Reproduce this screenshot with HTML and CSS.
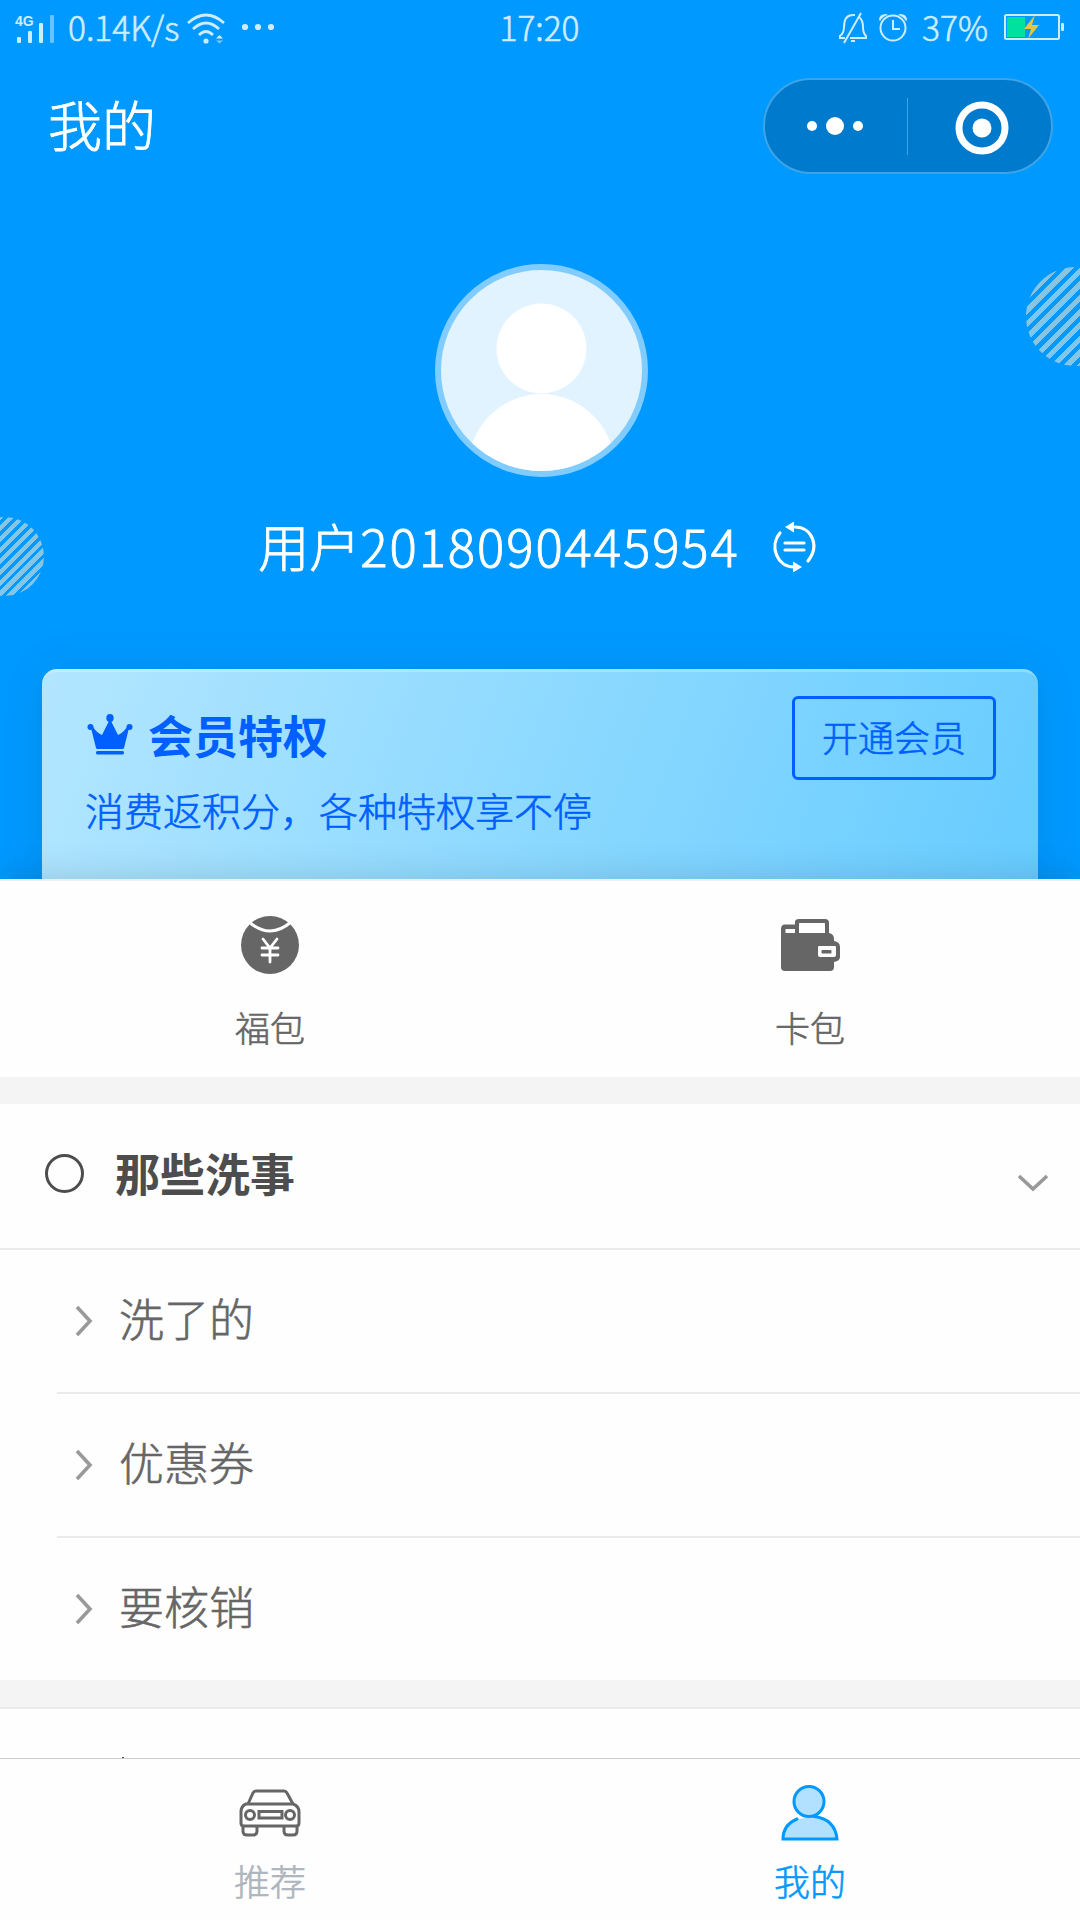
FILE: index.html
```
<!DOCTYPE html>
<html lang="zh-CN">

<head>
    <meta charset="utf-8" />
    <title>我的</title>
    <link rel="stylesheet" href="styles.css">
</head>

<body>
    <div class="page">
        <div class="top">
            <!-- 状态栏 -->
            <div class="status">
                <div class="status-left">
                    <svg class="signal" width="42" height="32" viewBox="0 0 42 32">
                        <text x="0" y="14">4G</text>
                        <rect x="2" y="25" width="4" height="6" rx="1" />
                        <rect x="13" y="19" width="4" height="12" rx="1" />
                        <rect x="24" y="11" width="4" height="20" rx="1" />
                        <rect x="35" y="3" width="4" height="28" rx="1" opacity=".5" />
                    </svg>
                    <span class="speed">0.14K/s</span>
                    <svg class="wifi" width="38" height="32" viewBox="0 0 38 32">
                        <g fill="none" stroke="#cdecff" stroke-width="2.8">
                            <path d="M1 11Q19-5 37 11" />
                            <path d="M6 17Q19 5 32 17" />
                            <path d="M12 23Q19 16 26 23" />
                        </g>
                        <circle cx="19" cy="29" r="2.6" />
                        <path d="M29 26.500l3.500-3.500 3.500 3.500z" />
                        <path d="M29 28.500l3.500 3 3.500-3z" opacity=".6" />
                    </svg>
                    <svg class="more" width="34" height="8" viewBox="0 0 34 8">
                        <circle cx="4" cy="4" r="3.100" />
                        <circle cx="17" cy="4" r="3.100" />
                        <circle cx="30" cy="4" r="3.100" />
                    </svg>
                </div>
                <span class="time">17:20</span>
                <div class="status-right">
                    <svg class="bell" width="30" height="32" viewBox="0 0 30 32" fill="none" stroke="#cdecff" stroke-width="2">
                        <path d="M7 26H2v-2q4-3 4-9Q6 3 15 3h2M21 5q4 3 4 10 0 6 3 9v2H12M23 1L6 31M13 29h4" />
                    </svg>
                    <svg class="clock" width="28" height="30" viewBox="0 0 28 30">
                        <circle cx="14" cy="16" r="12.500" fill="none" stroke="#cdecff" stroke-width="2" />
                        <path d="M14 8v9h7" fill="none" stroke="#cdecff" stroke-width="2" />
                        <path d="M0 8q0-6 7-6l2 1q-5 1-8 6zM28 8q0-6-7-6l-2 1q5 1 8 6z" />
                    </svg>
                    <span class="percent">37%</span>
                    <svg class="battery" width="60" height="28" viewBox="0 0 60 28">
                        <rect x="1" y="2" width="54" height="24" rx="1.500" fill="none" stroke="#cdecff" stroke-width="2" />
                        <rect x="3" y="4" width="18" height="20" fill="#00e0a0" />
                        <rect x="57" y="10" width="3" height="8" rx="1" />
                        <path d="M31 2L20 16h7l-3 10 11-14h-7z" fill="#e5c73c" />
                    </svg>
                </div>
            </div>

            <!-- 标题栏 -->
            <div class="nav">
                <h1>我的</h1>
                <div class="capsule">
                    <svg class="capsule-more" width="56" height="18" viewBox="0 0 56 18" fill="#fff">
                        <circle cx="5" cy="9" r="5" />
                        <circle cx="28" cy="9" r="9" />
                        <circle cx="51" cy="9" r="5" />
                    </svg>
                    <i class="divider"></i>
                    <svg class="capsule-close" width="54" height="54" viewBox="0 0 54 54">
                        <circle cx="27" cy="27" r="23" fill="none" stroke="#fff" stroke-width="7" />
                        <circle cx="27" cy="27" r="9.500" fill="#fff" />
                    </svg>
                </div>
            </div>

            <!-- 用户信息 -->
            <div class="user">
                <div class="avatar">
                    <svg width="201" height="201" viewBox="0 0 201 201" fill="#fff">
                        <circle cx="100.500" cy="78.500" r="45" />
                        <ellipse cx="100.500" cy="200" rx="74" ry="76" />
                    </svg>
                </div>
                <div class="name">
                    <span>用户<b>2018090445954</b></span>
                    <svg width="46" height="50" viewBox="0 0 46 50" fill="none" stroke="#fff" stroke-width="3.2" stroke-linecap="round">
                        <path d="M8 11C-3 24 5 45 22 45" />
                        <path d="M23 5C40 5 48 24 36 39" />
                        <path d="M13 21h19M13 28h19" />
                        <path d="M13 5l9-5.500v11zM30 45l-9-5.500v11z" fill="#fff" stroke="none" />
                    </svg>
                </div>
            </div>
            <i class="deco deco-right"></i>
            <i class="deco deco-left"></i>

            <!-- 会员 -->
            <div class="vip">
                <div class="vip-text">
                    <h2>
                        <svg width="46" height="42" viewBox="0 0 46 42" fill="#0060ff">
                            <path d="M23 5l8 16q5-2 9-8l2 1-5 20q0 1-2 1H11q-2 0-2-1L4 14l2-1q4 6 9 8z" />
                            <ellipse cx="23" cy="4" rx="3.700" ry="4" />
                            <circle cx="3.500" cy="13" r="3" />
                            <circle cx="42.500" cy="13" r="3" />
                            <rect x="9" y="37" width="28" height="3.500" rx="1.500" />
                        </svg>
                        <span>会员特权</span>
                    </h2>
                    <p>消费返积分，各种特权享不停</p>
                </div>
                <a class="vip-btn" href="javascript:;">开通会员</a>
            </div>
        </div>

        <div class="bags">
            <a href="javascript:;">
                <svg width="60" height="60" viewBox="0 0 60 60">
                    <circle cx="30" cy="30" r="29" fill="#666" />
                    <path d="M9 7Q30 25 51 7" fill="none" stroke="#fff" stroke-width="3" />
                    <path d="M23 24l7 9 7-9M22 33h16M22 40h16M30 33v14" fill="none" stroke="#fff" stroke-width="2.800" stroke-linecap="round" />
                </svg>
                <span>福包</span>
            </a>
            <a href="javascript:;">
                <svg width="60" height="60" viewBox="0 0 60 60" fill="#666">
                    <path fill-rule="evenodd" d="M5 9.500h10V7q0-3 4-3h26q4 0 4 4v10q5 1 5 6v2q6 1 6 6v10q0 4-6 5v5q0 4-4 4H5q-4 0-4-4V14q0-4.500 4-4.500zM19 8v10h26V8zM5.500 14v4H15v-4zM39 31q-1 0-1 1v8q0 2 2 2h14q2 0 2-2v-8q0-1-1-1z" />
                    <rect x="41.500" y="35" width="10" height="3.500" rx="1" />
                </svg>
                <span>卡包</span>
            </a>
        </div>

        <div class="group">
            <div class="group-head">
                <i class="ring"></i>
                <h3>那些洗事</h3>
                <svg width="32" height="18" viewBox="0 0 32 18"><path d="M2 2l14 13L30 2" /></svg>
            </div>
            <ul>
                <li>
                    <svg width="18" height="32" viewBox="0 0 18 32"><path d="M2 2l13 14L2 30" /></svg>
                    <span>洗了的</span>
                </li>
                <li>
                    <svg width="18" height="32" viewBox="0 0 18 32"><path d="M2 2l13 14L2 30" /></svg>
                    <span>优惠券</span>
                </li>
                <li>
                    <svg width="18" height="32" viewBox="0 0 18 32"><path d="M2 2l13 14L2 30" /></svg>
                    <span>要核销</span>
                </li>
            </ul>
        </div>

        <!-- 下一组，只露出顶部 -->
        <div class="next"><i></i></div>

        <div class="tabbar">
            <a href="javascript:;">
                <svg width="62" height="60" viewBox="0 0 62 60" fill="none" stroke="#666" stroke-width="3">
                    <path d="M9 21l5-11q1-2 3-2h28q2 0 3 2l6 11" />
                    <path d="M7 21h47q6 2 6 8v11q0 3-3 3H5q-3 0-3-3V29q0-6 5-8z" />
                    <circle cx="11" cy="32" r="4.500" />
                    <circle cx="51" cy="32" r="4.500" />
                    <rect x="20" y="28.500" width="23" height="6.500" />
                    <path d="M4 43v5q0 4 4 4h6q4 0 4-4v-5M45 43v5q0 4 4 4h5q4 0 4-4v-5" />
                </svg>
                <span>推荐</span>
            </a>
            <a class="active" href="javascript:;">
                <svg width="60" height="60" viewBox="0 0 60 60" stroke="#09f" stroke-width="3">
                    <path d="M17 36Q3 42 3 56H57Q56 35 34 34z" fill="#b2e0ff" stroke="none" />
                    <path d="M17 36Q3 42 3 56H57Q55 36 34 33.500" fill="none" stroke-linecap="round" />
                    <circle cx="29" cy="18.500" r="15" fill="#b2e0ff" />
                </svg>
                <span>我的</span>
            </a>
        </div>
    </div>
</body>

</html>
```
FILE: styles.css
```
* {
    margin: 0;
    padding: 0;
    box-sizing: border-box;
}

body {
    font-family: "Noto Sans CJK SC", sans-serif;
    font-weight: 300;
    color: #666;
    background: #fff;
    -webkit-text-stroke: .6px;
}

a {
    color: inherit;
    text-decoration: none;
}

svg {
    display: block;
    flex: none;
}

.page {
    width: 1080px;
    height: 1920px;
    display: flex;
    flex-direction: column;
    overflow: hidden;
}

/* 顶部蓝色区域 */
.top {
    position: relative;
    height: 879px;
    background: #09f;
    overflow: hidden;
}

.status {
    height: 56px;
    display: grid;
    grid-template-columns: 1fr auto 1fr;
    align-items: center;
    padding: 0 16px 0 15px;
    font-size: 33.5px;
    line-height: 54px;
    color: #cdecff;
    fill: #cdecff;
}

.status span {
    padding-bottom: 2px;
}

.status-left,
.status-right {
    display: flex;
    align-items: center;
}

.status-right {
    justify-content: flex-end;
}

.signal {
    margin-right: 11px;
}

.signal text {
    font: bold 14px "Liberation Sans", sans-serif;
    -webkit-text-stroke: 0;
}

.wifi {
    margin: -1px 16px 0 8px;
}

.more {
    margin-top: -2px;
}

.bell {
    margin-top: -1px;
}

.clock {
    margin: -2px 15px 0 11px;
}

.percent {
    margin-right: 16px;
}

.battery {
    margin-top: -2px;
}

.nav {
    height: 140px;
    display: flex;
    align-items: center;
    justify-content: space-between;
    padding: 0 27px 0 48px;
}

.nav h1 {
    padding-bottom: 4px;
    font-size: 54px;
    font-weight: 300;
    line-height: 80px;
    color: #fff;
    -webkit-text-stroke: .8px;
}

.capsule {
    width: 290px;
    height: 96px;
    display: flex;
    align-items: center;
    padding: 0 42px;
    border: 2px solid #3da4e8;
    border-radius: 48px;
    background: #007acc;
}

.divider {
    width: 2px;
    height: 57px;
    margin: 0 47px 0 44px;
    background: #3da4e8;
}

.capsule-close {
    margin-top: 3px;
}

.user {
    display: flex;
    flex-direction: column;
    align-items: center;
    padding: 68px 0 0 3px;
}

.avatar {
    width: 213px;
    height: 213px;
    border: 6px solid #80ccff;
    border-radius: 50%;
    background: #e0f3ff;
    overflow: hidden;
}

.name {
    display: flex;
    align-items: center;
    margin: 29px 7px 0 0;
    font-size: 51px;
    line-height: 78px;
    color: #fff;
    -webkit-text-stroke: .8px;
}

.name span {
    padding-bottom: 3px;
}

.name b {
    font-weight: inherit;
    letter-spacing: 1.9px;
}

.name svg {
    margin-left: 32px;
}

/* 斜纹圆 */
.deco {
    position: absolute;
    border-radius: 50%;
}

.deco-right {
    top: 267px;
    left: 1026px;
    width: 99px;
    height: 99px;
    background: repeating-linear-gradient(135deg, #85c5e6 0 5.2px, #09f 5.2px 9.6px);
}

.deco-left {
    top: 517px;
    left: -35px;
    width: 79px;
    height: 79px;
    background: repeating-linear-gradient(135deg, #85c5e6 0 4.4px, #09f 4.4px 7.7px);
}

.vip {
    height: 230px;
    position: absolute;
    left: 42px;
    right: 42px;
    bottom: -20px;
    display: flex;
    justify-content: space-between;
    align-items: flex-start;
    padding: 24px 42px 0 43px;
    border-top: 3px solid rgba(255, 255, 255, .25);
    border-radius: 15px 15px 0 0;
    color: #0060ff;
    background: linear-gradient(110deg, #b3e6ff, #6cf) border-box;
    box-shadow: 0 0 45px rgba(0, 0, 0, .08);
}

.vip h2 {
    display: flex;
    align-items: center;
    gap: 15px;
    margin: 6px 0 0 2px;
    font-size: 45px;
    font-weight: 700;
    line-height: 66px;
    -webkit-text-stroke: 0;
}

.vip p {
    margin-top: 13px;
    font-size: 39px;
    line-height: 56px;
}

.vip-btn {
    width: 204px;
    height: 84px;
    border: 3px solid #0060ff;
    border-radius: 6px;
    font-size: 36px;
    line-height: 74px;
    text-align: center;
}

/* 福包 卡包 */
.bags {
    position: relative;
    height: 198px;
    display: flex;
    border-top: 2px solid #eee;
    background: #fefefe;
    box-shadow: 0 0 36px rgba(0, 0, 0, .14);
}

.bags a,
.tabbar a {
    flex: 1;
    display: flex;
    flex-direction: column;
    align-items: center;
}

.bags a {
    padding-top: 34px;
}

.bags span {
    margin-top: 27px;
    font-size: 35px;
    line-height: 50px;
}

/* 列表 */
.group {
    position: relative;
    border-top: 27px solid #f4f4f4;
    background: #fefefe;
}

.group-head {
    height: 146px;
    display: flex;
    align-items: center;
    padding: 0 31px 5px 45px;
    border-bottom: 2px solid #ebebeb;
}

.group-head svg {
    margin: 19px 0 0 auto;
}

.group svg {
    fill: none;
    stroke: #999;
    stroke-width: 3.6;
}

.ring {
    width: 39px;
    height: 39px;
    border: 3px solid #4d4d4d;
    border-radius: 50%;
}

.group h3 {
    margin-left: 31px;
    padding-bottom: 2px;
    font-size: 45px;
    font-weight: 700;
    color: #4d4d4d;
    -webkit-text-stroke: 0;
}

.group ul {
    list-style: none;
    padding-left: 57px;
}

.group li {
    height: 144px;
    display: flex;
    align-items: center;
    padding: 0 0 1px 18px;
    border-bottom: 2px solid #ebebeb;
    font-size: 45px;
}

.group li:last-child {
    height: 142px;
    border-bottom: 0;
}

.group li span {
    margin-left: 26px;
    padding-bottom: 7px;
}

.next {
    height: 78px;
    position: relative;
    border-top: 27px solid #f4f4f4;
    background: #fefefe;
    box-shadow: inset 0 2px #ebebeb;
}

.next i {
    display: block;
    width: 2px;
    height: 1px;
    margin: 50px 0 0 122px;
    background: #4d4d4d;
}

/* 底部标签栏 */
.tabbar {
    flex: 1;
    display: flex;
    border-top: 1px solid #ccc;
    background: #fefefe;
}

.tabbar a {
    padding-top: 24px;
    color: #adb5bd;
}

.tabbar span {
    margin-top: 12px;
    font-size: 36px;
    line-height: 50px;
}

.tabbar .active {
    color: #09f;
}
```
